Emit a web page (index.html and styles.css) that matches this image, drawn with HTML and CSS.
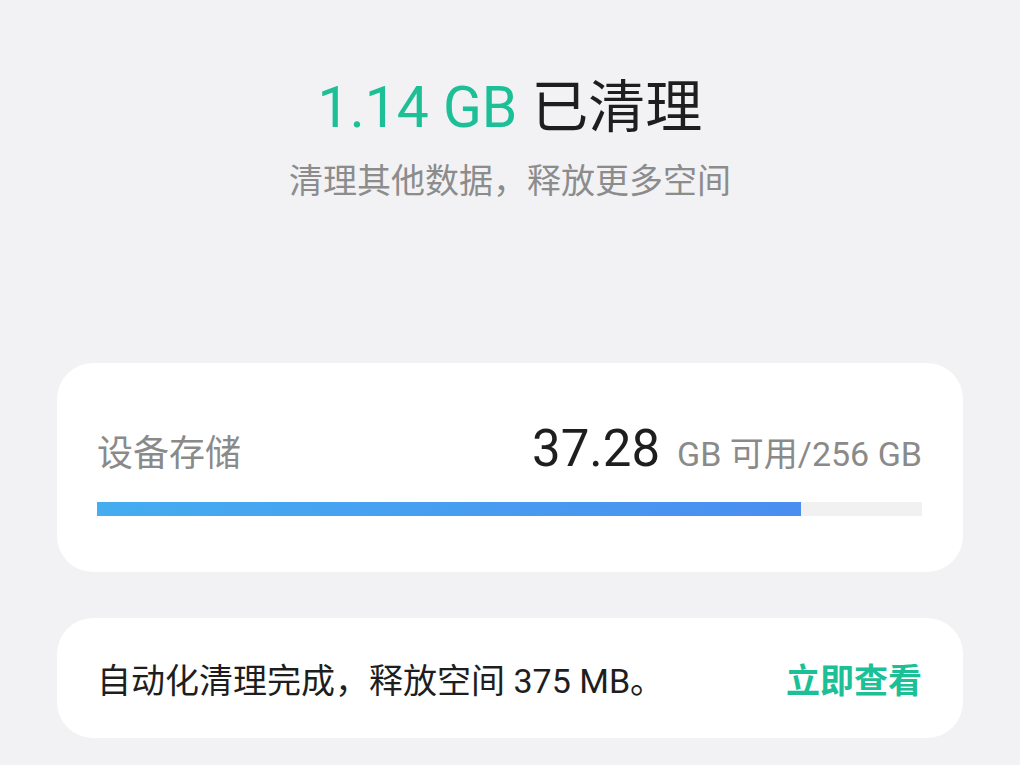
FILE: index.html
```html
<!DOCTYPE html>
<html lang="zh">
<head>
<meta charset="utf-8">
<title>存储清理</title>
<link rel="stylesheet" href="styles.css">
</head>
<body>
<main class="page">
  <header class="hero">
    <h1 class="hero-title"><span class="hero-num">1.14 GB</span> 已清理</h1>
    <p class="hero-sub">清理其他数据，释放更多空间</p>
  </header>
  <section class="card storage">
    <div class="storage-row">
      <span class="storage-label">设备存储</span>
      <span class="storage-value"><span class="storage-big">37.28</span><span class="storage-unit">GB 可用/256 GB</span></span>
    </div>
    <div class="bar"><div class="bar-fill" style="width: 85.3%"></div></div>
  </section>
  <section class="card notice">
    <span class="notice-text">自动化清理完成，释放空间 375 MB。</span>
    <span class="notice-link">立即查看</span>
  </section>
</main>
</body>
</html>
```
FILE: styles.css
```css
html, body {
  margin: 0;
  padding: 0;
  background: #f2f2f4;
}
body {
  font-family: Roboto, "Noto Sans CJK SC", "Noto Sans", sans-serif;
  width: 1020px;
  height: 765px;
  overflow: hidden;
}
.page {
  padding: 0 57px;
  display: flex;
  flex-direction: column;
}
.hero {
  text-align: center;
  padding-top: 72px;
  height: 363px;
  box-sizing: border-box;
}
.hero-title {
  margin: 0;
  font-size: 57px;
  font-weight: 400;
  line-height: 72px;
  color: #1e1e1e;
}
.hero-num {
  color: #1cbf96;
}
.hero-sub {
  margin: 18px 0 0;
  font-size: 34px;
  line-height: 38px;
  color: #8c8c8c;
}
.card {
  background: #ffffff;
  border-radius: 36px;
  box-sizing: border-box;
  padding: 0 41px 0 40px;
}
.storage {
  height: 209px;
  padding-top: 56px;
}
.storage-row {
  display: flex;
  justify-content: space-between;
  align-items: baseline;
  height: 68px;
}
.storage-label {
  font-size: 36px;
  color: #8a8a8a;
}
.storage-big {
  font-size: 51px;
  color: #1e1e1e;
}
.storage-unit {
  margin-left: 17px;
  font-size: 34px;
  color: #8a8a8a;
}
.bar {
  margin-top: 15px;
  height: 14px;
  background: #f1f1f1;
}
.bar-fill {
  height: 100%;
  background: linear-gradient(90deg, #45adf0, #4a8ef0);
}
.notice {
  margin-top: 46px;
  height: 120px;
  display: flex;
  align-items: center;
  justify-content: space-between;
}
.notice-text {
  font-size: 34px;
  color: #1e1e1e;
}
.notice-link {
  font-size: 34px;
  font-weight: 700;
  color: #1cbf96;
}
```
